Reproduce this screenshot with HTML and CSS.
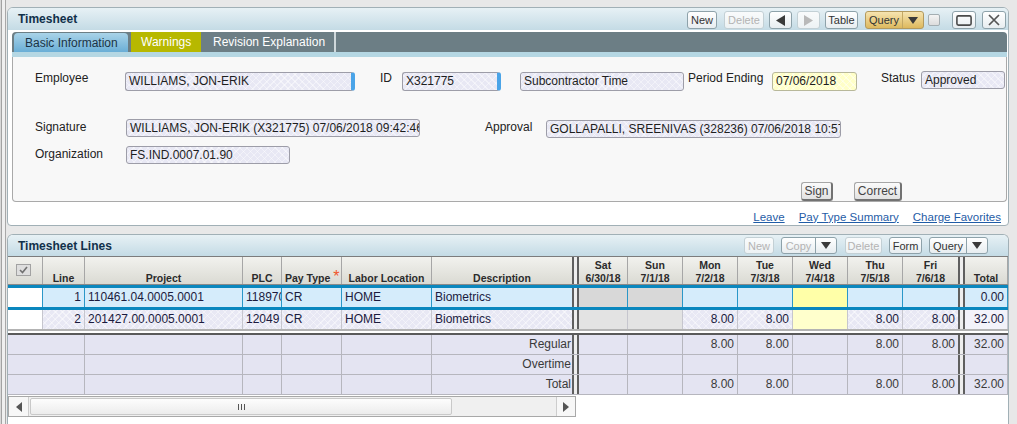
FILE: index.html
```html
<!DOCTYPE html>
<html>
<head>
<meta charset="utf-8">
<title>Timesheet</title>
<link rel="stylesheet" href="styles.css">
</head>
<body>
<div class="app">
  <section class="panel panel-top">
    <header class="titlebar">
      <h1 class="title">Timesheet</h1>
      <div class="toolbar tb-top">
        <button class="btn w30">New</button>
        <button class="btn off w40 ml7">Delete</button>
        <button class="btn w23 ml5"><svg width="9" height="11" viewBox="0 0 9 11"><polygon points="9,0 0,5.5 9,11" fill="#3a3a3a"/></svg></button>
        <button class="btn off w23 ml5"><svg width="9" height="11" viewBox="0 0 9 11"><polygon points="0,0 9,5.5 0,11" fill="#b9b9b9"/></svg></button>
        <button class="btn w33 ml5">Table</button>
        <div class="split gold ml7"><span class="seg seg-main">Query</span><span class="seg seg-dd"><svg width="10" height="7" viewBox="0 0 10 7"><polygon points="0,0 10,0 5,7" fill="#3a3a3a"/></svg></span></div>
        <span class="tick ml4"></span>
        <button class="btn w24 ml12"><svg width="16" height="11" viewBox="0 0 16 11"><rect x="0.9" y="0.9" width="14.2" height="9.2" rx="1.5" fill="none" stroke="#4a4a4a" stroke-width="1.6"/></svg></button>
        <button class="btn w24 ml6"><svg width="12" height="12" viewBox="0 0 12 12"><path d="M1 1 L11 11 M11 1 L1 11" stroke="#555" stroke-width="1.7"/></svg></button>
      </div>
    </header>

    <div class="tabframe">
      <nav class="tabs">
        <span class="tab tab-basic">Basic Information</span>
        <span class="tab tab-warn">Warnings</span>
        <span class="tab tab-rev">Revision Explanation</span>
      </nav>
      <div class="tabline"></div>
      <div class="form">
        <div class="frow row1">
          <span class="lbl l-emp">Employee</span>
          <span class="fld req-fld f-emp">WILLIAMS, JON-ERIK</span>
          <span class="lbl l-id">ID</span>
          <span class="fld req-fld f-id">X321775</span>
          <span class="fld f-sub">Subcontractor Time</span>
          <span class="lbl l-pe">Period Ending</span>
          <span class="fld f-date">07/06/2018</span>
          <span class="lbl l-st">Status</span>
          <span class="fld f-st">Approved</span>
        </div>
        <div class="frow row2">
          <span class="lbl l-wide">Signature</span>
          <span class="fld clipfld f-sig">WILLIAMS, JON-ERIK (X321775) 07/06/2018 09:42:46</span>
          <span class="lbl l-ap">Approval</span>
          <span class="fld clipfld f-ap">GOLLAPALLI, SREENIVAS (328236) 07/06/2018 10:57</span>
        </div>
        <div class="frow row3">
          <span class="lbl l-wide">Organization</span>
          <span class="fld f-org">FS.IND.0007.01.90</span>
        </div>
        <div class="frow row4">
          <button class="pbtn p-sign">Sign</button>
          <button class="pbtn p-corr">Correct</button>
        </div>
      </div>
    </div>

    <div class="links">
      <a class="lnk">Leave</a>
      <a class="lnk">Pay Type Summary</a>
      <a class="lnk">Charge Favorites</a>
    </div>
  </section>

  <section class="panel panel-lines">
    <header class="titlebar tb2">
      <h1 class="title">Timesheet Lines</h1>
      <div class="toolbar tb-lines">
        <button class="btn sm off w30">New</button>
        <div class="split ml7"><span class="seg seg-copy off">Copy</span><span class="seg seg-dd"><svg width="10" height="7" viewBox="0 0 10 7"><polygon points="0,0 10,0 5,7" fill="#3a3a3a"/></svg></span></div>
        <button class="btn sm off w37 ml8">Delete</button>
        <button class="btn sm w33 ml7">Form</button>
        <div class="split ml7"><span class="seg seg-main">Query</span><span class="seg seg-dd"><svg width="10" height="7" viewBox="0 0 10 7"><polygon points="0,0 10,0 5,7" fill="#3a3a3a"/></svg></span></div>
      </div>
    </header>

    <div class="grid">
      <div class="row hrow">
        <div class="hc hc-chk"><svg width="15" height="12" viewBox="0 0 15 12"><rect x="0.5" y="0.5" width="14" height="11" fill="#dedede" stroke="#a2a2a2"/><path d="M4 6 L6.5 8.5 L11 3" fill="none" stroke="#707070" stroke-width="1.6"/></svg></div>
        <div class="hc">Line</div>
        <div class="hc">Project</div>
        <div class="hc">PLC</div>
        <div class="hc hc-left"><span>Pay Type <b class="req">*</b></span></div>
        <div class="hc">Labor Location</div>
        <div class="hc nb">Description</div>
        <div class="sep"></div>
        <div class="hc"><span>Sat</span><span>6/30/18</span></div>
        <div class="hc"><span>Sun</span><span>7/1/18</span></div>
        <div class="hc"><span>Mon</span><span>7/2/18</span></div>
        <div class="hc"><span>Tue</span><span>7/3/18</span></div>
        <div class="hc"><span>Wed</span><span>7/4/18</span></div>
        <div class="hc"><span>Thu</span><span>7/5/18</span></div>
        <div class="hc nb"><span>Fri</span><span>7/6/18</span></div>
        <div class="sep"></div>
        <div class="hc">Total</div>
      </div>

      <div class="row brow r1">
        <div class="c white"></div>
        <div class="c num">1</div>
        <div class="c">110461.04.0005.0001</div>
        <div class="c clip">118970</div>
        <div class="c">CR</div>
        <div class="c">HOME</div>
        <div class="c nb">Biometrics</div>
        <div class="sep"></div>
        <div class="c wk"></div>
        <div class="c wk"></div>
        <div class="c num"></div>
        <div class="c num"></div>
        <div class="c num hol"></div>
        <div class="c num"></div>
        <div class="c num nb"></div>
        <div class="sep"></div>
        <div class="c num">0.00</div>
      </div>

      <div class="row brow r2">
        <div class="c white"></div>
        <div class="c num">2</div>
        <div class="c">201427.00.0005.0001</div>
        <div class="c clip">12049</div>
        <div class="c">CR</div>
        <div class="c">HOME</div>
        <div class="c nb">Biometrics</div>
        <div class="sep"></div>
        <div class="c wk"></div>
        <div class="c wk"></div>
        <div class="c num">8.00</div>
        <div class="c num">8.00</div>
        <div class="c num hol"></div>
        <div class="c num">8.00</div>
        <div class="c num nb">8.00</div>
        <div class="sep"></div>
        <div class="c num tot">32.00</div>
      </div>

      <div class="sum">
        <div class="row srow">
          <div class="c span2"></div>
          <div class="c"></div>
          <div class="c"></div>
          <div class="c"></div>
          <div class="c"></div>
          <div class="c num slbl nb">Regular</div>
          <div class="sep"></div>
          <div class="c"></div>
          <div class="c"></div>
          <div class="c num">8.00</div>
          <div class="c num">8.00</div>
          <div class="c num"></div>
          <div class="c num">8.00</div>
          <div class="c num nb">8.00</div>
          <div class="sep"></div>
          <div class="c num">32.00</div>
        </div>
        <div class="row srow">
          <div class="c span2"></div>
          <div class="c"></div>
          <div class="c"></div>
          <div class="c"></div>
          <div class="c"></div>
          <div class="c num slbl nb">Overtime</div>
          <div class="sep"></div>
          <div class="c"></div>
          <div class="c"></div>
          <div class="c num"></div>
          <div class="c num"></div>
          <div class="c num"></div>
          <div class="c num"></div>
          <div class="c num nb"></div>
          <div class="sep"></div>
          <div class="c num"></div>
        </div>
        <div class="row srow">
          <div class="c span2"></div>
          <div class="c"></div>
          <div class="c"></div>
          <div class="c"></div>
          <div class="c"></div>
          <div class="c num slbl nb">Total</div>
          <div class="sep"></div>
          <div class="c"></div>
          <div class="c"></div>
          <div class="c num">8.00</div>
          <div class="c num">8.00</div>
          <div class="c num"></div>
          <div class="c num">8.00</div>
          <div class="c num nb">8.00</div>
          <div class="sep"></div>
          <div class="c num">32.00</div>
        </div>
      </div>

      <div class="hscroll">
        <div class="sb-arrow"><svg width="6" height="10" viewBox="0 0 6 10"><polygon points="6,0 0,5 6,10" fill="#555"/></svg></div>
        <div class="sb-thumb"><svg width="7" height="6" viewBox="0 0 7 6"><path d="M0.5 0 V6 M3.5 0 V6 M6.5 0 V6" stroke="#555" stroke-width="1"/></svg></div>
        <div class="sb-track"></div>
        <div class="sb-arrow sb-right"><svg width="6" height="10" viewBox="0 0 6 10"><polygon points="0,0 6,5 0,10" fill="#555"/></svg></div>
      </div>
    </div>
  </section>
</div>
</body>
</html>
```

FILE: styles.css
```css
* { box-sizing: border-box; }

html, body {
  margin: 0;
  height: 424px;
  overflow: hidden;
}

body {
  font-family: "Liberation Sans", Arial, sans-serif;
  font-size: 12px;
  color: #222;
  background: #e6e6e6;
}

.app {
  height: 424px;
  padding: 7px 0 0 7px;
  background: linear-gradient(to right, #d8d8d8 0 1px, #a2a2a2 1px 2px, #efefef 2px 5px, #a8a8a8 5px 6px, #e8e8e8 6px);
}

.panel {
  width: 1002px;
  background: #fff;
  border: 1px solid #a1b0b6;
  border-radius: 6px 6px 4px 4px;
}

.panel-top { height: 219px; }

.panel-lines {
  margin-top: 8px;
  height: 200px;
  border-bottom: 0;
}

/* ---------- title bars ---------- */
.titlebar {
  display: flex;
  align-items: center;
  height: 22px;
  padding: 0 2px 0 10px;
  background: linear-gradient(#e7f1f5, #c4dbe5);
  border-radius: 5px 5px 0 0;
}

.tb2 { height: 21px; padding-right: 20px; }

.title {
  flex: 1;
  margin: 0;
  font-size: 12px;
  font-weight: bold;
  color: #11304a;
}

.toolbar {
  display: flex;
  align-items: center;
}

.tb-top { margin-top: 2px; }

.btn {
  display: inline-flex;
  align-items: center;
  justify-content: center;
  height: 18px;
  padding: 0;
  border: 1px solid #8ea2aa;
  border-radius: 3px;
  background: linear-gradient(#ffffff, #e7edf0);
  font: 11px "Liberation Sans", Arial, sans-serif;
  color: #333;
}

.btn.sm { height: 17px; }

.btn.off {
  color: #b3b3b3;
  border-color: #c3d0d5;
  background: linear-gradient(#f9fbfc, #edf2f4);
}

.w22 { width: 22px; }
.w23 { width: 23px; }
.w24 { width: 24px; }
.w30 { width: 30px; }
.w33 { width: 33px; }
.w37 { width: 37px; }
.w40 { width: 40px; }
.ml4 { margin-left: 4px; }
.ml5 { margin-left: 5px; }
.ml6 { margin-left: 6px; }
.ml7 { margin-left: 7px; }
.ml8 { margin-left: 8px; }
.ml12 { margin-left: 12px; }

.split {
  display: flex;
  height: 17px;
  border: 1px solid #8ea2aa;
  border-radius: 3px;
  background: linear-gradient(#ffffff, #e7edf0);
  font-size: 11px;
  color: #333;
}

.tb-top .split { height: 18px; }

.split.gold {
  border-color: #b39a5e;
  background: linear-gradient(#f6e4b0, #ddb95e);
}

.seg {
  display: flex;
  align-items: center;
  justify-content: center;
}

.seg-main { width: 36px; }
.seg-copy { width: 33px; }
.seg.off { color: #b3b3b3; }

.seg-dd {
  width: 21px;
  border-left: 1px solid #8ea2aa;
}

.gold .seg-dd { border-left-color: #c3a864; }

.tick {
  width: 12px;
  height: 12px;
  border: 1px solid #a4aeb2;
  border-radius: 2px;
  background: linear-gradient(#f4f4f4, #dcdcdc);
}

/* ---------- tabs ---------- */
.tabframe { margin: 2px 1px 0 4px; }

.tabs {
  display: flex;
  height: 20px;
  padding-left: 2px;
  background: #6c7e85;
  border-radius: 4px 4px 0 0;
}

.tab {
  display: flex;
  align-items: center;
  padding-left: 10px;
  color: #fff;
  font-size: 12px;
}

.tab-basic {
  width: 114px;
  margin-top: 1px;
  padding-left: 11px;
  color: #1b3345;
  background: linear-gradient(#a9d3e8, #6aaed6);
  border-radius: 4px 4px 0 0;
}

.tab-warn {
  width: 70px;
  margin-left: 3px;
  background: #b7b800;
}

.tab-rev {
  width: 133px;
  margin-left: 2px;
  border-right: 2px solid #cfd8db;
}

.tabline {
  height: 5px;
  background: #b5d7e3;
}

/* ---------- form ---------- */
.form {
  height: 145px;
  padding: 14px 0 0 22px;
  background: #f8f8f8;
  border: 1px solid #a9a9a9;
  border-top: 0;
  border-radius: 0 0 4px 4px;
}

.frow {
  display: flex;
  align-items: flex-start;
}

.row2 { margin-top: 28px; }
.row3 { margin-top: 8px; }
.row4 {
  margin-top: 18px;
  justify-content: flex-end;
  padding-right: 104px;
}

.lbl {
  line-height: 14px;
  color: #222;
  white-space: nowrap;
}

.fld {
  display: block;
  height: 19px;
  margin-top: 1px;
  padding: 0 3px;
  line-height: 17px;
  border: 1px solid #9d9da8;
  border-radius: 3px;
  background-color: #e8e8f4;
  background-image:
    repeating-linear-gradient(45deg, rgba(255,255,255,0.45) 0 1px, transparent 1px 5px),
    repeating-linear-gradient(-45deg, rgba(255,255,255,0.45) 0 1px, transparent 1px 5px);
  color: #1e1e1e;
  white-space: nowrap;
  overflow: hidden;
}

.req-fld { border-right: 4px solid #4aa4e8; }
.clipfld { padding-right: 0; }

.l-emp { width: 90px; }
.f-emp { width: 230px; }
.l-id { width: 22px; margin-left: 25px; }
.f-id { width: 99px; }
.f-sub { width: 164px; margin-left: 19px; }
.l-pe { width: 84px; margin-left: 4px; }
.f-date {
  width: 85px;
  background-color: #ffffc8;
  border-color: #b8b89a;
}
.l-st { width: 40px; margin-left: 24px; }
.f-st { width: 84px; height: 18px; margin-top: 0; }

.l-wide { width: 91px; }
.row2 .lbl, .row3 .lbl { margin-top: 1px; }
.f-sig { width: 294px; height: 18px; margin-top: 0; }
.l-ap { width: 61px; margin-left: 65px; }
.f-ap { width: 295px; height: 18px; }
.f-org { width: 164px; height: 18px; margin-top: 0; }

.pbtn {
  height: 19px;
  padding: 0;
  border-style: solid;
  border-width: 1px 2px 2px 1px;
  border-color: #a6a6a6 #727272 #727272 #a6a6a6;
  border-radius: 3px;
  background: linear-gradient(#fbfbfb, #e2e2e2);
  font: 12px "Liberation Sans", Arial, sans-serif;
  color: #444;
}

.p-sign { width: 32px; }
.p-corr { width: 48px; margin-left: 21px; }

/* ---------- links ---------- */
.links {
  display: flex;
  justify-content: flex-end;
  align-items: center;
  gap: 14px;
  height: 23px;
  padding: 6px 7px 0 0;
}

.lnk {
  font-size: 11.5px;
  color: #1f5ca6;
  text-decoration: underline;
}

/* ---------- grid ---------- */
.row {
  display: grid;
  grid-template-columns: 35px 42px 158px 39px 60px 90px 140px 7px 49px 55px 55px 55px 55px 55px 55px 7px 43px;
}

.row > div { border-right: 1px solid #a6a6a6; }
.row > .nb { border-right: 0; }

.sep {
  border-left: 2px solid #5f5f5f;
  border-right: 2px solid #5f5f5f !important;
  background: #eeeeee;
}

.hrow {
  height: 29px;
  border-top: 1px solid #7c7c7c;
  border-bottom: 1px solid #8a8a8a;
  background: linear-gradient(#f2f2ee, #dadad3);
}

.hc {
  display: flex;
  flex-direction: column;
  justify-content: flex-end;
  align-items: center;
  font-size: 10.5px;
  font-weight: bold;
  line-height: 12.5px;
  color: #2b2b2b;
  white-space: nowrap;
}

.hc-left {
  align-items: flex-start;
  padding-left: 3px;
}

.hc-chk {
  justify-content: flex-start;
  align-items: flex-start;
  padding: 7px 0 0 8px;
}

.req {
  font-size: 16px;
  line-height: 10px;
  font-weight: normal;
  color: #f0552a;
}

.brow .c {
  height: 19px;
  padding: 0 3px;
  line-height: 19px;
  color: #1b1b3e;
  white-space: nowrap;
  overflow: hidden;
}

.c.num { text-align: right; }
.c.clip { padding-right: 0; }

.r1 {
  border-top: 3px solid #0a87be;
  border-bottom: 3px solid #0a87be;
  background: #d5ecfb;
}

.r1 > div { border-right-color: #2a97c8; }
.r1 .white { background: #fff; }
.r1 .wk { background: #d8d8d8; }
.r1 .hol { background: #ffffa8; }

.r2 {
  border-bottom: 2px solid #b3b3b3;
  background-color: #e8e8f4;
  background-image:
    repeating-linear-gradient(45deg, rgba(255,255,255,0.45) 0 1px, transparent 1px 5px),
    repeating-linear-gradient(-45deg, rgba(255,255,255,0.45) 0 1px, transparent 1px 5px);
}

.r2 > div { border-right-color: #c6c6ce; }
.r2 .white { background: #fff; }
.r2 .wk { background: #e3e3e3; }
.r2 .hol { background: #ffffcc; }
.r2 .tot { background: #f3f3fa; }

.sum {
  margin-top: 2px;
  border-top: 2px solid #5a5a5a;
}

.srow {
  height: 20px;
  border-bottom: 1px solid #b6b6be;
  background: #e4e4f2;
}

.srow > div { border-right-color: #b6b6be; }

.srow .c {
  padding: 0 3px;
  line-height: 19px;
  color: #3a3a3a;
}

.srow .slbl { padding-right: 1px; }
.span2 { grid-column: span 2; }

/* ---------- horizontal scrollbar ---------- */
.hscroll {
  display: flex;
  width: 568px;
  height: 21px;
  margin-top: 1px;
  border: 1px solid #a8a8a8;
  background: #f0f0f0;
}

.sb-arrow {
  display: flex;
  align-items: center;
  justify-content: center;
  width: 20px;
  border-right: 1px solid #cdcdcd;
  background: #f7f7f7;
}

.sb-right {
  width: 19px;
  border-right: 0;
  border-left: 1px solid #cdcdcd;
}

.sb-thumb {
  display: flex;
  align-items: center;
  justify-content: center;
  width: 422px;
  margin: 1px 0 1px 1px;
  border: 1px solid #c9c9c9;
  border-radius: 2px;
  background: linear-gradient(#fdfdfd, #ececec);
}

.sb-track { flex: 1; }
```
